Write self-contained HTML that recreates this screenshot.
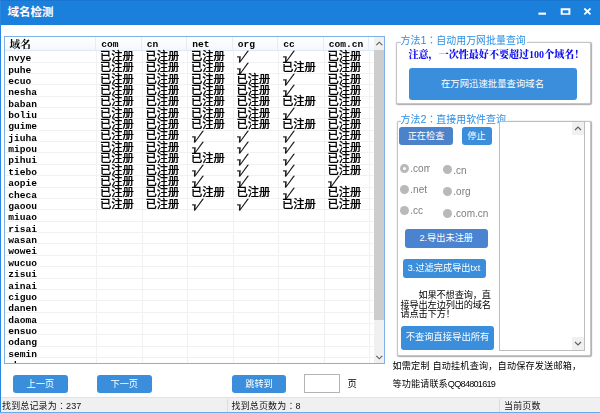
<!DOCTYPE html>
<html lang="zh-CN">
<head>
<meta charset="utf-8">
<title>域名检测</title>
<style>
html,body{margin:0;padding:0;}
body{width:600px;height:413px;position:relative;overflow:hidden;background:#fff;
 font-family:"Liberation Sans","Noto Sans CJK SC",sans-serif;font-size:9px;color:#000;}
.abs{position:absolute;}
#titlebar{left:0;top:0;width:600px;height:25px;background:#1b7fdc;border-top:1px solid #1a75d0;box-sizing:border-box;}
#titlebar .t{left:7.5px;top:4px;color:#fff;font-weight:bold;font-size:11.5px;line-height:14px;white-space:nowrap;}
#lborder{left:0;top:0;width:1px;height:413px;background:#2a86de;}
#bborder{left:0;top:412px;width:600px;height:1px;background:#69aae8;}
#grid{left:4px;top:36px;width:381px;height:328px;border:1px solid #7eb1e8;box-sizing:border-box;overflow:hidden;background:#fff;}
#grid .hdr{left:0;top:0;width:369px;height:12.7px;background:linear-gradient(#ffffff,#f4f7fb);border-bottom:1px solid #dfe9f5;}
.hl{left:0;width:369px;height:1px;background:#f1f1f1;}
.vl{top:13.7px;width:1px;height:320px;background:#f1f1f1;}
.vh{top:0;width:1px;height:13px;background:#e5ecf6;}
.c{white-space:nowrap;font-family:"Liberation Mono","Noto Serif CJK SC",monospace;font-weight:bold;color:#000;}
.n{font-size:9.6px;line-height:11px;letter-spacing:0;}
.z{font-family:"Liberation Sans","Noto Sans CJK SC",sans-serif;font-weight:500;font-size:11.3px;line-height:11.4px;letter-spacing:-0.05px;-webkit-text-stroke:0.2px #000;}
.k{display:inline-block;transform:skewX(-24deg) scaleX(1.25);transform-origin:0 100%;font-family:"Noto Serif CJK SC",serif;font-weight:900;-webkit-text-stroke:0.25px #000;}
.h{font-size:9.6px;line-height:11px;}
.hz{font-family:"Noto Serif CJK SC",serif;font-size:10.7px;line-height:12px;font-weight:bold;}
#sb{left:368.5px;top:0;width:10.5px;height:326px;background:#f0f0f0;}
#sb .thumb{left:0;top:13px;width:10.5px;height:270px;background:#cdcdcd;}
.btn{background:#3a8edb;border-radius:3px;color:#fff;text-align:center;white-space:nowrap;font-size:9.2px;}
.gb{border:1px solid #c6c6c6;border-radius:2px;box-shadow:0.3px 0.5px 1.2px rgba(0,0,0,0.35);box-sizing:border-box;background:#fff;}
.lg{color:#2d8fe3;font-size:9.95px;line-height:12px;white-space:nowrap;overflow:hidden;background:#fff;}
.tc{font-family:"Noto Sans CJK TC",sans-serif;}
.rd{width:9.4px;height:9.4px;border-radius:50%;background:#b9b9b9;}
.rt{color:#7d7d7d;font-size:10px;line-height:12px;white-space:nowrap;overflow:hidden;}
.ss{font-family:"Liberation Sans","Noto Sans CJK SC",sans-serif;white-space:nowrap;font-weight:400;}
#status{left:1px;top:397px;width:599px;height:15px;background:#f0f0f0;border-top:1px solid #e2e2e2;box-sizing:border-box;}
#status .s{top:2px;letter-spacing:0.15px;font-size:9px;line-height:12px;color:#111;white-space:nowrap;}
#status .sep{top:1px;width:1px;height:13px;background:#dcdcdc;}
</style>
</head>
<body>
<div id="wrap" class="abs" style="left:0;top:0;width:600px;height:413px;transform:translateZ(0);">
<div id="titlebar" class="abs"><div class="abs t">域名检测</div>
<svg class="abs" style="left:530px;top:-1px" width="70" height="25" viewBox="0 0 70 25">
<rect x="8.4" y="12.6" width="7.6" height="2.1" fill="#fff"/>
<path fill-rule="evenodd" fill="#fff" d="M30.7 8.2h9.7v6.6h-9.7z M32.7 10.3h5.7v2.9h-5.7z"/>
<path d="M54.3 8.5 L60.5 14.3 M60.5 8.5 L54.3 14.3" stroke="#fff" stroke-width="1.75" fill="none"/>
</svg>
</div>
<div id="lborder" class="abs"></div>

<div id="grid" class="abs">
<div class="abs hdr"></div>
<div class="abs hl" style="top:24.57px"></div>
<div class="abs hl" style="top:35.93px"></div>
<div class="abs hl" style="top:47.30px"></div>
<div class="abs hl" style="top:58.66px"></div>
<div class="abs hl" style="top:70.03px"></div>
<div class="abs hl" style="top:81.39px"></div>
<div class="abs hl" style="top:92.75px"></div>
<div class="abs hl" style="top:104.12px"></div>
<div class="abs hl" style="top:115.49px"></div>
<div class="abs hl" style="top:126.85px"></div>
<div class="abs hl" style="top:138.22px"></div>
<div class="abs hl" style="top:149.58px"></div>
<div class="abs hl" style="top:160.94px"></div>
<div class="abs hl" style="top:172.31px"></div>
<div class="abs hl" style="top:183.68px"></div>
<div class="abs hl" style="top:195.04px"></div>
<div class="abs hl" style="top:206.41px"></div>
<div class="abs hl" style="top:217.77px"></div>
<div class="abs hl" style="top:229.13px"></div>
<div class="abs hl" style="top:240.50px"></div>
<div class="abs hl" style="top:251.87px"></div>
<div class="abs hl" style="top:263.23px"></div>
<div class="abs hl" style="top:274.59px"></div>
<div class="abs hl" style="top:285.96px"></div>
<div class="abs hl" style="top:297.32px"></div>
<div class="abs hl" style="top:308.69px"></div>
<div class="abs hl" style="top:320.06px"></div>
<div class="abs hl" style="top:331.42px"></div>
<div class="abs hl" style="top:342.78px"></div>
<div class="abs vl" style="left:91.00px"></div>
<div class="abs vh" style="left:90.30px"></div>
<div class="abs vl" style="left:136.50px"></div>
<div class="abs vh" style="left:135.80px"></div>
<div class="abs vl" style="left:182.00px"></div>
<div class="abs vh" style="left:181.30px"></div>
<div class="abs vl" style="left:227.50px"></div>
<div class="abs vh" style="left:226.80px"></div>
<div class="abs vl" style="left:273.00px"></div>
<div class="abs vh" style="left:272.30px"></div>
<div class="abs vl" style="left:318.50px"></div>
<div class="abs vh" style="left:317.80px"></div>
<div class="abs vl" style="left:364.00px"></div>
<div class="abs vh" style="left:363.30px"></div>
<div class="abs" style="left:0;top:0;width:369px;height:326px;filter:grayscale(1);">
<div class="abs c hz" style="left:4.50px;top:1.00px">域名</div>
<div class="abs c h" style="left:96.30px;top:2.00px">com</div>
<div class="abs c h" style="left:141.80px;top:2.00px">cn</div>
<div class="abs c h" style="left:187.30px;top:2.00px">net</div>
<div class="abs c h" style="left:232.80px;top:2.00px">org</div>
<div class="abs c h" style="left:278.30px;top:2.00px">cc</div>
<div class="abs c h" style="left:323.80px;top:2.00px">com.cn</div>
<div class="abs c n" style="left:3.30px;top:16.20px">nvye</div>
<div class="abs c z" style="left:95.10px;top:13.90px">已注册</div>
<div class="abs c z" style="left:140.60px;top:13.90px">已注册</div>
<div class="abs c z" style="left:186.10px;top:13.90px">已注册</div>
<div class="abs c z" style="left:227.40px;top:14.30px"><span class="k">√</span></div>
<div class="abs c z" style="left:272.90px;top:14.30px"><span class="k">√</span></div>
<div class="abs c z" style="left:322.60px;top:13.90px">已注册</div>
<div class="abs c n" style="left:3.30px;top:27.57px">puhe</div>
<div class="abs c z" style="left:95.10px;top:25.27px">已注册</div>
<div class="abs c z" style="left:140.60px;top:25.27px">已注册</div>
<div class="abs c z" style="left:186.10px;top:25.27px">已注册</div>
<div class="abs c z" style="left:227.40px;top:25.67px"><span class="k">√</span></div>
<div class="abs c z" style="left:277.10px;top:25.27px">已注册</div>
<div class="abs c z" style="left:322.60px;top:25.27px">已注册</div>
<div class="abs c n" style="left:3.30px;top:38.93px">ecuo</div>
<div class="abs c z" style="left:95.10px;top:36.63px">已注册</div>
<div class="abs c z" style="left:140.60px;top:36.63px">已注册</div>
<div class="abs c z" style="left:186.10px;top:36.63px">已注册</div>
<div class="abs c z" style="left:231.60px;top:36.63px">已注册</div>
<div class="abs c z" style="left:272.90px;top:37.03px"><span class="k">√</span></div>
<div class="abs c z" style="left:322.60px;top:36.63px">已注册</div>
<div class="abs c n" style="left:3.30px;top:50.30px">nesha</div>
<div class="abs c z" style="left:95.10px;top:48.00px">已注册</div>
<div class="abs c z" style="left:140.60px;top:48.00px">已注册</div>
<div class="abs c z" style="left:186.10px;top:48.00px">已注册</div>
<div class="abs c z" style="left:231.60px;top:48.00px">已注册</div>
<div class="abs c z" style="left:272.90px;top:48.40px"><span class="k">√</span></div>
<div class="abs c z" style="left:322.60px;top:48.00px">已注册</div>
<div class="abs c n" style="left:3.30px;top:61.66px">baban</div>
<div class="abs c z" style="left:95.10px;top:59.36px">已注册</div>
<div class="abs c z" style="left:140.60px;top:59.36px">已注册</div>
<div class="abs c z" style="left:186.10px;top:59.36px">已注册</div>
<div class="abs c z" style="left:231.60px;top:59.36px">已注册</div>
<div class="abs c z" style="left:277.10px;top:59.36px">已注册</div>
<div class="abs c z" style="left:322.60px;top:59.36px">已注册</div>
<div class="abs c n" style="left:3.30px;top:73.03px">boliu</div>
<div class="abs c z" style="left:95.10px;top:70.73px">已注册</div>
<div class="abs c z" style="left:140.60px;top:70.73px">已注册</div>
<div class="abs c z" style="left:186.10px;top:70.73px">已注册</div>
<div class="abs c z" style="left:231.60px;top:70.73px">已注册</div>
<div class="abs c z" style="left:272.90px;top:71.12px"><span class="k">√</span></div>
<div class="abs c z" style="left:322.60px;top:70.73px">已注册</div>
<div class="abs c n" style="left:3.30px;top:84.39px">guime</div>
<div class="abs c z" style="left:95.10px;top:82.09px">已注册</div>
<div class="abs c z" style="left:140.60px;top:82.09px">已注册</div>
<div class="abs c z" style="left:186.10px;top:82.09px">已注册</div>
<div class="abs c z" style="left:231.60px;top:82.09px">已注册</div>
<div class="abs c z" style="left:277.10px;top:82.09px">已注册</div>
<div class="abs c z" style="left:322.60px;top:82.09px">已注册</div>
<div class="abs c n" style="left:3.30px;top:95.75px">jiuha</div>
<div class="abs c z" style="left:95.10px;top:93.45px">已注册</div>
<div class="abs c z" style="left:140.60px;top:93.45px">已注册</div>
<div class="abs c z" style="left:181.90px;top:93.85px"><span class="k">√</span></div>
<div class="abs c z" style="left:227.40px;top:93.85px"><span class="k">√</span></div>
<div class="abs c z" style="left:272.90px;top:93.85px"><span class="k">√</span></div>
<div class="abs c z" style="left:322.60px;top:93.45px">已注册</div>
<div class="abs c n" style="left:3.30px;top:107.12px">mipou</div>
<div class="abs c z" style="left:95.10px;top:104.82px">已注册</div>
<div class="abs c z" style="left:140.60px;top:104.82px">已注册</div>
<div class="abs c z" style="left:181.90px;top:105.22px"><span class="k">√</span></div>
<div class="abs c z" style="left:227.40px;top:105.22px"><span class="k">√</span></div>
<div class="abs c z" style="left:272.90px;top:105.22px"><span class="k">√</span></div>
<div class="abs c z" style="left:322.60px;top:104.82px">已注册</div>
<div class="abs c n" style="left:3.30px;top:118.49px">pihui</div>
<div class="abs c z" style="left:95.10px;top:116.19px">已注册</div>
<div class="abs c z" style="left:140.60px;top:116.19px">已注册</div>
<div class="abs c z" style="left:186.10px;top:116.19px">已注册</div>
<div class="abs c z" style="left:227.40px;top:116.59px"><span class="k">√</span></div>
<div class="abs c z" style="left:272.90px;top:116.59px"><span class="k">√</span></div>
<div class="abs c z" style="left:322.60px;top:116.19px">已注册</div>
<div class="abs c n" style="left:3.30px;top:129.85px">tiebo</div>
<div class="abs c z" style="left:95.10px;top:127.55px">已注册</div>
<div class="abs c z" style="left:140.60px;top:127.55px">已注册</div>
<div class="abs c z" style="left:181.90px;top:127.95px"><span class="k">√</span></div>
<div class="abs c z" style="left:227.40px;top:127.95px"><span class="k">√</span></div>
<div class="abs c z" style="left:272.90px;top:127.95px"><span class="k">√</span></div>
<div class="abs c z" style="left:322.60px;top:127.55px">已注册</div>
<div class="abs c n" style="left:3.30px;top:141.22px">aopie</div>
<div class="abs c z" style="left:95.10px;top:138.91px">已注册</div>
<div class="abs c z" style="left:140.60px;top:138.91px">已注册</div>
<div class="abs c z" style="left:181.90px;top:139.31px"><span class="k">√</span></div>
<div class="abs c z" style="left:227.40px;top:139.31px"><span class="k">√</span></div>
<div class="abs c z" style="left:272.90px;top:139.31px"><span class="k">√</span></div>
<div class="abs c z" style="left:318.40px;top:139.31px"><span class="k">√</span></div>
<div class="abs c n" style="left:3.30px;top:152.58px">checa</div>
<div class="abs c z" style="left:95.10px;top:150.28px">已注册</div>
<div class="abs c z" style="left:140.60px;top:150.28px">已注册</div>
<div class="abs c z" style="left:186.10px;top:150.28px">已注册</div>
<div class="abs c z" style="left:231.60px;top:150.28px">已注册</div>
<div class="abs c z" style="left:272.90px;top:150.68px"><span class="k">√</span></div>
<div class="abs c z" style="left:322.60px;top:150.28px">已注册</div>
<div class="abs c n" style="left:3.30px;top:163.94px">gaoou</div>
<div class="abs c z" style="left:95.10px;top:161.64px">已注册</div>
<div class="abs c z" style="left:140.60px;top:161.64px">已注册</div>
<div class="abs c z" style="left:181.90px;top:162.04px"><span class="k">√</span></div>
<div class="abs c z" style="left:227.40px;top:162.04px"><span class="k">√</span></div>
<div class="abs c z" style="left:277.10px;top:161.64px">已注册</div>
<div class="abs c z" style="left:322.60px;top:161.64px">已注册</div>
<div class="abs c n" style="left:3.30px;top:175.31px">miuao</div>
<div class="abs c n" style="left:3.30px;top:186.68px">risai</div>
<div class="abs c n" style="left:3.30px;top:198.04px">wasan</div>
<div class="abs c n" style="left:3.30px;top:209.41px">wowei</div>
<div class="abs c n" style="left:3.30px;top:220.77px">wucuo</div>
<div class="abs c n" style="left:3.30px;top:232.13px">zisui</div>
<div class="abs c n" style="left:3.30px;top:243.50px">ainai</div>
<div class="abs c n" style="left:3.30px;top:254.87px">ciguo</div>
<div class="abs c n" style="left:3.30px;top:266.23px">danen</div>
<div class="abs c n" style="left:3.30px;top:277.59px">daoma</div>
<div class="abs c n" style="left:3.30px;top:288.96px">ensuo</div>
<div class="abs c n" style="left:3.30px;top:300.32px">odang</div>
<div class="abs c n" style="left:3.30px;top:311.69px">semin</div>
<div class="abs c n" style="left:3.30px;top:323.06px">shang</div>
</div>
<div id="sb" class="abs"><div class="abs thumb"></div>
<svg class="abs" style="left:0;top:0" width="10.5" height="13" viewBox="0 0 10.5 13"><path d="M2.3 8.2 L5.3 5.2 L8.3 8.2" fill="none" stroke="#606060" stroke-width="1.15"/></svg>
<svg class="abs" style="left:0;top:313.5px" width="10.5" height="13" viewBox="0 0 10.5 13"><path d="M2.3 4.8 L5.3 7.8 L8.3 4.8" fill="none" stroke="#606060" stroke-width="1.15"/></svg>
</div>
</div>

<div class="abs btn" style="left:13px;top:375px;width:54.5px;height:18px;line-height:18px;">上一页</div>
<div class="abs btn" style="left:97px;top:375px;width:54.5px;height:18px;line-height:18px;">下一页</div>
<div class="abs btn" style="left:232px;top:375px;width:54px;height:18px;line-height:18px;">跳转到</div>
<div class="abs" style="left:304px;top:374px;width:36px;height:19px;border:1px solid #b4b4b4;box-sizing:border-box;background:#fff;"></div>
<div class="abs ss" style="left:347.5px;top:378px;font-size:9.3px;line-height:12px;">页</div>


<div class="abs gb" style="left:396px;top:42px;width:194.5px;height:61.5px;"></div>
<div class="abs lg" style="left:400.5px;top:34.3px;height:10.7px;padding-right:1px;">方法<span style="font-size:10.8px">1</span><span class="tc" lang="zh-TW">：</span>自动用万网批量查询</div>
<div class="abs ss" style="left:408.5px;top:48.5px;font-size:10.05px;line-height:12px;font-weight:900;color:#1010f0;font-family:'Liberation Serif','Noto Serif CJK SC',serif;">注意，一次性最好不要超过100个域名！</div>
<div class="abs btn" style="left:408.5px;top:68px;width:168px;height:31.5px;line-height:31.5px;font-size:9.4px;">在万网迅速批量查询域名</div>


<div class="abs gb" style="left:396.5px;top:120.5px;width:194.5px;height:235px;"></div>
<div class="abs lg" style="left:400.5px;top:113px;height:10.6px;padding-right:1px;">方法<span style="font-size:10.8px">2</span><span class="tc" lang="zh-TW">：</span>直接用软件查询</div>
<div class="abs" style="left:499px;top:120.5px;width:85.5px;height:230px;border:1px solid #bdbdbd;box-sizing:border-box;background:#fff;">
 <div class="abs" style="right:0;top:0;width:12px;height:13px;background:#f0f0f0;"></div>
 <div class="abs" style="right:0;bottom:0;width:12px;height:13px;background:#f0f0f0;"></div>
 <svg class="abs" style="right:0;top:0" width="12" height="13" viewBox="0 0 12 13"><path d="M3 8 L6 5 L9 8" fill="none" stroke="#606060" stroke-width="1.15"/></svg>
 <svg class="abs" style="right:0;bottom:0" width="12" height="13" viewBox="0 0 12 13"><path d="M3 5 L6 8 L9 5" fill="none" stroke="#606060" stroke-width="1.15"/></svg>
</div>
<div class="abs btn" style="left:399px;top:126.5px;width:54px;height:18.5px;line-height:18.5px;background:#4b82c9;">正在检查</div>
<div class="abs btn" style="left:461.5px;top:126.5px;width:30px;height:18.5px;line-height:18.5px;">停止</div>

<div class="abs rd" style="left:400px;top:164px;background:#fff;border:3px solid #b9b9b9;box-sizing:border-box;"></div>
<div class="abs rt" style="left:410.3px;top:163px;width:19.8px;">.com</div>
<div class="abs rd" style="left:443px;top:165px;"></div>
<div class="abs rt" style="left:453.3px;top:165px;">.cn</div>
<div class="abs rd" style="left:400px;top:185px;"></div>
<div class="abs rt" style="left:410.3px;top:184px;">.net</div>
<div class="abs rd" style="left:443px;top:186.5px;"></div>
<div class="abs rt" style="left:453.3px;top:186px;height:11px;">.org</div>
<div class="abs rd" style="left:400px;top:205.5px;"></div>
<div class="abs rt" style="left:410.3px;top:205px;">.cc</div>
<div class="abs rd" style="left:443px;top:208.5px;"></div>
<div class="abs rt" style="left:453.3px;top:208px;">.com.cn</div>

<div class="abs btn" style="left:405px;top:229.2px;width:82.5px;height:18.8px;line-height:18.8px;background:#4a84d0;">2.导出未注册</div>
<div class="abs btn" style="left:402.5px;top:259px;width:83px;height:18.5px;line-height:18.5px;">3.过滤完成导出txt</div>

<div class="abs ss" style="left:400.5px;top:291px;width:92px;font-size:9.2px;line-height:9.5px;white-space:normal;letter-spacing:-0.15px;"><span style="display:inline-block;width:18px"></span>如果不想查询，直<br>接导出左边列出的域名<br>请点击下方！</div>

<div class="abs btn" style="left:401px;top:326.3px;width:93px;height:23.4px;line-height:23.4px;font-size:9.3px;">不查询直接导出所有</div>

<div class="abs ss" style="left:392.5px;top:360px;font-size:9.15px;line-height:12px;letter-spacing:0.18px;">如需定制 自动挂机查询，自动保存发送邮箱，</div>
<div class="abs ss" style="left:392.5px;top:378px;font-size:9.15px;line-height:12px;letter-spacing:0.1px;">等功能请联系<span style="letter-spacing:-0.75px">QQ84801619</span></div>


<div id="status" class="abs">
<div class="abs s" style="left:1px;">找到总记录为<span class="tc" lang="zh-TW">：</span>237</div>
<div class="abs sep" style="left:226px;"></div>
<div class="abs s" style="left:230.5px;">找到总页数为<span class="tc" lang="zh-TW">：</span>8</div>
<div class="abs sep" style="left:498px;"></div>
<div class="abs s" style="left:503px;">当前页数</div>
</div>
<div id="bborder" class="abs"></div>
</div>
</body></html>
